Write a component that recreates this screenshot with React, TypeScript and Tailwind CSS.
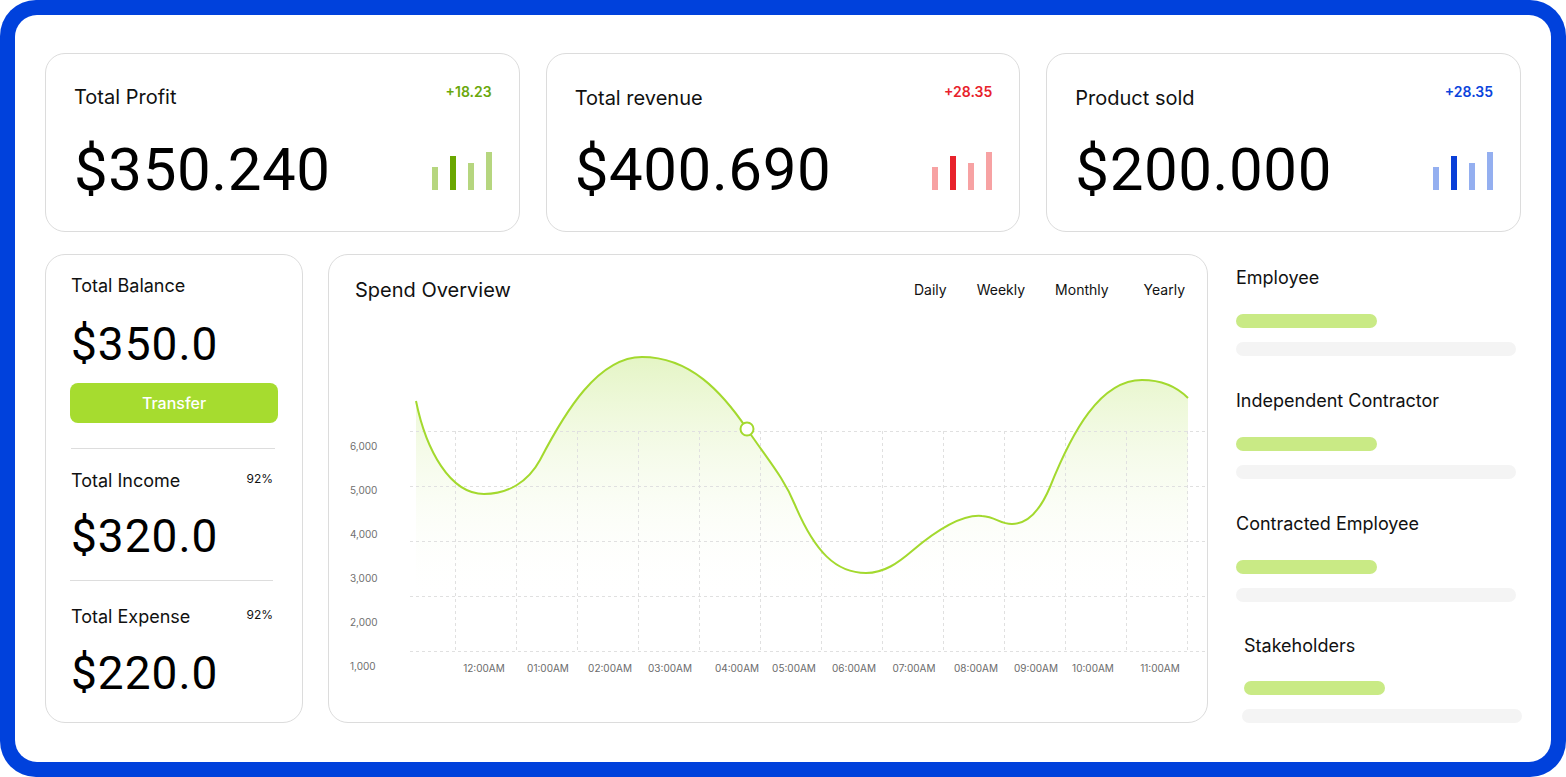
import React from "react";

type Tone = "green" | "red" | "blue";

const toneStyles: Record<Tone, { delta: string; light: string; dark: string }> = {
  green: { delta: "text-[#6aa80c]", light: "bg-[#b6d67f]", dark: "bg-[#6aa700]" },
  red: { delta: "text-[#e8222b]", light: "bg-[#f7a2a3]", dark: "bg-[#e8222b]" },
  blue: { delta: "text-[#0b44dc]", light: "bg-[#94aff0]", dark: "bg-[#0a3fd8]" },
};

const stats: { title: string; value: string; delta: string; tone: Tone }[] = [
  { title: "Total Profit", value: "$350.240", delta: "+18.23", tone: "green" },
  { title: "Total revenue", value: "$400.690", delta: "+28.35", tone: "red" },
  { title: "Product sold", value: "$200.000", delta: "+28.35", tone: "blue" },
];

const barHeights = [23, 34, 27, 38];

function MiniBars({ tone }: { tone: Tone }) {
  const s = toneStyles[tone];
  return (
    <div className="flex items-end gap-[12px] mb-[10px]">
      {barHeights.map((h, i) => (
        <div key={i} className={`w-[6px] ${i === 1 ? s.dark : s.light}`} style={{ height: h }} />
      ))}
    </div>
  );
}

function StatCard({ title, value, delta, tone }: (typeof stats)[number]) {
  return (
    <div className="rounded-[20px] border border-[#dcdcdc] bg-white pt-[28px] pb-[31px] pl-[28px] pr-[27px]">
      <div className="flex items-start justify-between">
        <div className={`text-[20px] leading-[24px] text-[#111] ${tone === "green" ? "mt-[3px]" : "mt-[4px]"}`}>{title}</div>
        <div className={`text-[14px] leading-[20px] font-semibold ${toneStyles[tone].delta}`}>{delta}</div>
      </div>
      <div className={`flex items-end justify-between ${tone === "green" ? "mt-[31px]" : "mt-[30px]"}`}>
        <div className="font-['Roboto',sans-serif] text-[60px] leading-[60px] tracking-[0.6px] text-black">{value}</div>
        <MiniBars tone={tone} />
      </div>
    </div>
  );
}

function BalanceCard() {
  return (
    <div className="w-[258px] shrink-0 rounded-[20px] border border-[#dcdcdc] bg-white pt-[19px] pb-[25px] pl-[25px] pr-[23px]">
      <div className="text-[18px] leading-[24px] text-[#111]">Total Balance</div>
      <div className="mt-[23px] font-['Roboto',sans-serif] text-[46px] leading-[46px] tracking-[1px] text-black">$350.0</div>
      <button className="mt-[16px] -ml-[1px] h-[40px] w-[208px] rounded-[8px] bg-[#a6dc2f] text-[16px] font-medium text-white">
        Transfer
      </button>
      <div className="mt-[25px] h-px w-[204px] bg-[#dddddd]" />
      <div className="mt-[20px] flex items-start justify-between pr-[6px]">
        <div className="text-[18px] leading-[24px] text-[#111]">Total Income</div>
        <div className="mt-[2px] text-[12px] leading-[16px] text-[#111]">92%</div>
      </div>
      <div className="mt-[20px] font-['Roboto',sans-serif] text-[46px] leading-[46px] tracking-[1px] text-black">$320.0</div>
      <div className="mt-[21px] -ml-[1px] h-px w-[203px] bg-[#dddddd]" />
      <div className="mt-[24px] flex items-start justify-between pr-[6px]">
        <div className="text-[18px] leading-[24px] text-[#111]">Total Expense</div>
        <div className="mt-[2px] text-[12px] leading-[16px] text-[#111]">92%</div>
      </div>
      <div className="mt-[21px] font-['Roboto',sans-serif] text-[46px] leading-[46px] tracking-[1px] text-black">$220.0</div>
    </div>
  );
}

const curve =
  "M416,401 C426,450 450,494 484,494 C508,494 528,482 540,460 C565,412 598,357 642,357 C690,357 722,392 747,429 C768,460 784,478 795,505 C815,552 836,573 866,573 C884,573 898,563 912,551 C938,529 962,514 982,516 C996,517 1000,524 1012,524 C1030,524 1042,506 1050,487 C1072,432 1100,380 1142,380 C1165,380 1180,390 1188,398";

const gridY = [431, 486, 541, 596, 651];
const gridX = [455, 516, 577, 638, 699, 760, 821, 882, 943, 1004, 1065, 1126, 1187];
const yLabels = [
  { t: "6,000", y: 447 },
  { t: "5,000", y: 491 },
  { t: "4,000", y: 535 },
  { t: "3,000", y: 579 },
  { t: "2,000", y: 623 },
  { t: "1,000", y: 667 },
];
const xLabels = [
  { t: "12:00AM", x: 484 },
  { t: "01:00AM", x: 548 },
  { t: "02:00AM", x: 610 },
  { t: "03:00AM", x: 670 },
  { t: "04:00AM", x: 737 },
  { t: "05:00AM", x: 794 },
  { t: "06:00AM", x: 854 },
  { t: "07:00AM", x: 914 },
  { t: "08:00AM", x: 976 },
  { t: "09:00AM", x: 1036 },
  { t: "10:00AM", x: 1093 },
  { t: "11:00AM", x: 1160 },
];

function SpendChart() {
  return (
    <svg width="878" height="419" viewBox="329 302 878 419" className="block">
      <defs>
        <linearGradient id="spendFill" gradientUnits="userSpaceOnUse" x1="0" y1="357" x2="0" y2="605">
          <stop offset="0" stopColor="#d6efa6" stopOpacity="0.65" />
          <stop offset="1" stopColor="#ffffff" stopOpacity="0" />
        </linearGradient>
      </defs>
      <path d={`${curve} L1188,651 L416,651 Z`} fill="url(#spendFill)" />
      {gridY.map((y) => (
        <line key={y} x1="410" x2="1207" y1={y + 0.5} y2={y + 0.5} stroke="#e0e0e0" strokeDasharray="3 3" />
      ))}
      {gridX.map((x) => (
        <line key={x} x1={x + 0.5} x2={x + 0.5} y1="431" y2="651" stroke="#e0e0e0" strokeDasharray="3 3" />
      ))}
      <path d={curve} fill="none" stroke="#a3d92e" strokeWidth="2" />
      <circle cx="747" cy="429" r="6.5" fill="#fff" stroke="#a3d92e" strokeWidth="2" />
      {yLabels.map((l) => (
        <text key={l.t} x="350" y={l.y} dominantBaseline="middle" fontSize="10" fill="#707070" fontFamily="Inter, sans-serif">
          {l.t}
        </text>
      ))}
      {xLabels.map((l) => (
        <text key={l.t} x={l.x} y="669.5" textAnchor="middle" dominantBaseline="middle" fontSize="10" fill="#6b6b6b" fontFamily="Inter, sans-serif">
          {l.t}
        </text>
      ))}
    </svg>
  );
}

function SpendCard() {
  return (
    <div className="w-[880px] shrink-0 rounded-[20px] border border-[#dcdcdc] bg-white">
      <div className="flex items-center justify-between pt-[23px] pl-[26px] pr-[22px]">
        <div className="text-[20px] leading-[24px] text-[#111]">Spend Overview</div>
        <div className="flex gap-[30px] text-[14px] leading-[20px] text-[#111]">
          <span>Daily</span>
          <span>Weekly</span>
          <span className="mr-[5px]">Monthly</span>
          <span>Yearly</span>
        </div>
      </div>
      <SpendChart />
    </div>
  );
}

const workers = ["Employee", "Independent Contractor", "Contracted Employee"];

function Progress({ label, shifted }: { label: string; shifted?: boolean }) {
  return (
    <div className={shifted ? "ml-[6px]" : ""}>
      <div className={`text-[18px] leading-[24px] text-[#111] ${shifted ? "ml-[2px]" : ""}`}>{label}</div>
      <div className={`h-[14px] w-[141px] rounded-full bg-[#c9ea85] ${shifted ? "mt-[23px] ml-[2px]" : "mt-[24px]"}`} />
      <div className="mt-[14px] h-[14px] w-[280px] rounded-full bg-[#f4f4f4]" />
    </div>
  );
}

export default function App() {
  return (
    <div className="h-[777px] w-[1566px] bg-white font-['Inter',sans-serif]">
      <div className="h-full rounded-[36px] bg-[#0041dc] p-[15px]">
        <div className="h-full rounded-[22px] bg-white px-[30px] pt-[38px]">
          <div className="grid grid-cols-3 gap-[26px]">
            {stats.map((s) => (
              <StatCard key={s.title} {...s} />
            ))}
          </div>
          <div className="mt-[22px] flex gap-[25px]">
            <BalanceCard />
            <SpendCard />
            <div className="ml-[3px] flex flex-1 flex-col pt-[12px]">
              {workers.map((w, i) => (
                <div key={w} className={i === 0 ? "" : "mt-[33px]"}>
                  <Progress label={w} />
                </div>
              ))}
              <div className="mt-[32px]">
                <Progress label="Stakeholders" shifted />
              </div>
            </div>
          </div>
        </div>
      </div>
    </div>
  );
}
